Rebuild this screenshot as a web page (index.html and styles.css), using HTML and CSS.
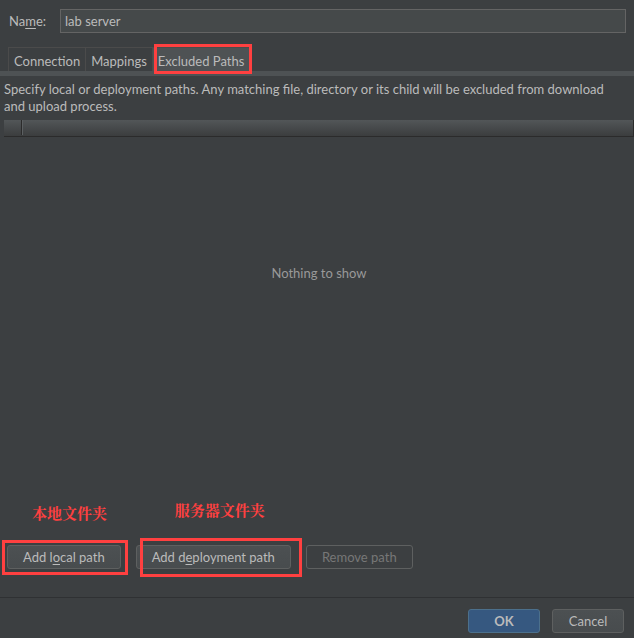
FILE: index.html
```html
<!DOCTYPE html>
<html lang="en">
<head>
<meta charset="utf-8">
<title>Deployment</title>
<link rel="stylesheet" href="styles.css">
</head>
<body>
<main class="dialog">
  <div class="name-row">
    <label class="name-label" for="name">Na<u>m</u>e:</label>
    <input id="name" class="name-input" type="text" value="lab server">
  </div>
  <div class="tabs" role="tablist">
    <button class="tab" type="button" role="tab">Connection</button>
    <button class="tab" type="button" role="tab">Mappings</button>
    <button class="tab tab-active" type="button" role="tab" aria-selected="true">Excluded Paths<span class="mark mark-tab"></span></button>
  </div>
  <section class="panel">
    <p class="hint">Specify local or deployment paths. Any matching file, directory or its child will be excluded from download and upload process.</p>
    <div class="list-header"><span class="list-column"></span></div>
    <div class="list-empty">Nothing to show</div>
    <div class="actions">
      <div class="action">
        <button class="button" type="button">Add l<u>o</u>cal path</button>
        <span class="mark mark-local"></span>
        <span class="note note-local" lang="zh">本地文件夹</span>
      </div>
      <div class="action">
        <button class="button" type="button">Add d<u>e</u>ployment path</button>
        <span class="mark mark-deploy"></span>
        <span class="note note-deploy" lang="zh">服务器文件夹</span>
      </div>
      <div class="action">
        <button class="button" type="button" disabled>Remove path</button>
      </div>
    </div>
  </section>
  <footer class="footer">
    <button class="button button-dialog button-primary" type="button">OK</button>
    <button class="button button-dialog" type="button">Cancel</button>
  </footer>
</main>
</body>
</html>
```
FILE: styles.css
```css
* {
  box-sizing: border-box;
}

body {
  margin: 0;
  background: #3c3f41;
  color: #bbbbbb;
  font: 13px/17px Lato, "Noto Sans CJK SC", sans-serif;
}

button,
input {
  margin: 0;
  color: inherit;
  font: inherit;
}

u {
  text-decoration: underline;
  text-decoration-thickness: 1px;
  text-underline-offset: 2px;
}

.dialog {
  display: flex;
  flex-direction: column;
  min-height: 100vh;
}

.name-row {
  display: flex;
  align-items: center;
  padding: 9px 8px 14px 9px;
}

.name-label {
  width: 51px;
}

.name-input {
  flex: 1;
  min-width: 0;
  height: 24px;
  padding: 0 4px;
  border: 1px solid #646464;
  background: #45494a;
}

.tabs {
  display: flex;
  padding-left: 8px;
  border-bottom: 5px solid #4e5254;
}

.tab {
  position: relative;
  height: 24px;
  padding: 3px 5px 0;
  border: solid #4b4b4b;
  border-width: 1px 0 0 1px;
  background: #3c3f41;
  white-space: nowrap;
}

.tab-active {
  background: #4e5254;
}

.mark {
  position: absolute;
  border: 3px solid #ff4040;
  pointer-events: none;
}

.mark-tab {
  inset: -4px -3px -3px 1px;
}

.panel {
  flex: 1;
  display: flex;
  flex-direction: column;
}

.hint {
  margin: 0;
  padding: 5px 12px 5px 4px;
}

.list-header {
  height: 17px;
  margin-left: 4px;
  border-right: 1px solid #2b2b2b;
  border-bottom: 1px solid #2b2b2b;
  background: linear-gradient(#525658, #3b3d3e);
}

.list-column {
  display: block;
  width: 18px;
  height: 15px;
  border-right: 1px solid #2b2b2b;
  box-shadow: 1px 0 #5c6062;
}

.list-empty {
  flex: 1;
  padding: 128px 0 0 4px;
  color: #999999;
  text-align: center;
}

.actions {
  display: flex;
  gap: 15px;
  padding: 0 7px 28px;
}

.action {
  position: relative;
}

.button {
  display: block;
  height: 24px;
  padding: 0 15px;
  border: 1px solid #5e6060;
  border-radius: 3px;
  background: linear-gradient(#4c5052, #484c4e);
  white-space: nowrap;
}

.button:disabled {
  background: none;
  color: #777777;
}

.mark-local {
  inset: -5px -7px -6px -5px;
}

.mark-deploy {
  inset: -7px -11px -8px 4px;
}

.note {
  position: absolute;
  color: #ff4040;
  font: bold 15px/20px "Noto Serif CJK SC", "Noto Sans CJK SC", serif;
  white-space: nowrap;
}

.note-local {
  left: 25px;
  bottom: 46px;
}

.note-deploy {
  left: 39px;
  bottom: 49px;
}

.footer {
  display: flex;
  justify-content: flex-end;
  gap: 12px;
  padding: 11px 10px 5px;
  border-top: 1px solid #2f3133;
}

.button-dialog {
  width: 72px;
  padding: 0;
}

.button-primary {
  border-color: #4c708c;
  background: #365880;
  font-weight: bold;
}
```
